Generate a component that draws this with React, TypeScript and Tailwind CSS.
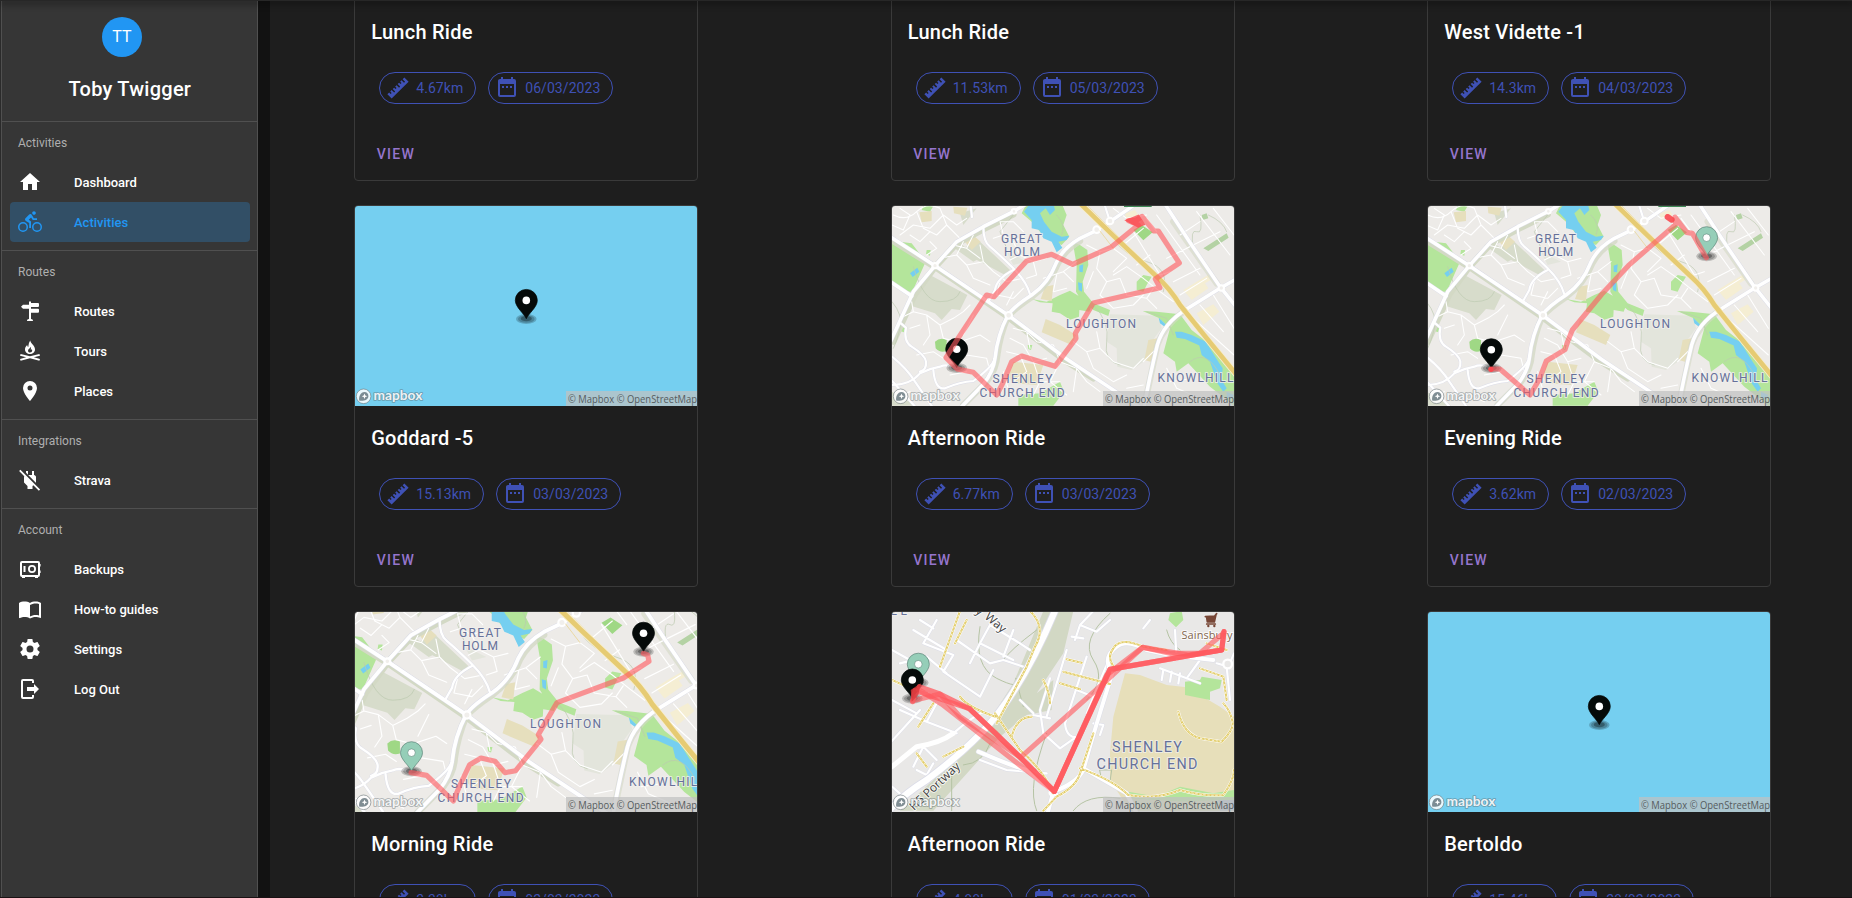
import React from "react";

const ICONS = {
  home: "M10,20V14H14V20H19V12H22L12,3L2,12H5V20H10Z",
  bike: "M5,20.5A3.5,3.5 0 0,1 1.5,17A3.5,3.5 0 0,1 5,13.5A3.5,3.5 0 0,1 8.5,17A3.5,3.5 0 0,1 5,20.5M5,12A5,5 0 0,0 0,17A5,5 0 0,0 5,22A5,5 0 0,0 10,17A5,5 0 0,0 5,12M14.8,10H19V8.2H15.8L13.86,4.93C13.57,4.43 13,4.1 12.4,4.1C11.93,4.1 11.5,4.29 11.2,4.6L7.5,8.29C7.19,8.6 7,9 7,9.5C7,10.13 7.33,10.66 7.85,10.97L11.2,13V18H13V11.5L10.75,9.85L13.07,7.5M19,20.5A3.5,3.5 0 0,1 15.5,17A3.5,3.5 0 0,1 19,13.5A3.5,3.5 0 0,1 22.5,17A3.5,3.5 0 0,1 19,20.5M19,12A5,5 0 0,0 14,17A5,5 0 0,0 19,22A5,5 0 0,0 24,17A5,5 0 0,0 19,12M16,4.8C17,4.8 17.8,4 17.8,3C17.8,2 17,1.2 16,1.2C15,1.2 14.2,2 14.2,3C14.2,4 15,4.8 16,4.8Z",
  sign: "M11,3L12,2L13,3V4H20Q21,4 21,5V7Q21,8 20,8H13V9.7H20Q21,9.7 21,10.7V12.7Q21,13.7 20,13.7H13V20C14.3,20 15,20.8 15,22H9C9,20.8 9.7,20 11,20V9.7H5L3,7.7L5,5.7H11V3Z",
  campfire: "M12.3,1.5C12.3,4.5 17,6.2 17,10.4C17,13 14.8,15 12,15C9.2,15 7,13 7,10.4C7,8.4 7.9,7 9.2,5.9C9.3,7 9.6,7.6 10.3,8C10.6,5.5 10.8,3.2 12.3,1.5M12.4,7.8C12.5,9.5 10,10 10,11.7C10,12.8 10.9,13.5 12,13.5C13.2,13.5 14.2,12.7 14.2,11.5C14.2,10.9 14,10.4 13.7,10C13.5,10.6 13.2,10.9 12.8,11C13.1,9.8 13,8.7 12.4,7.8M2.6,14.9L12,17.3L21.4,14.9L22,16.7L15.9,18.3L22,19.9L21.4,21.8L12,19.3L2.6,21.8L2,19.9L8.1,18.3L2,16.7Z",
  marker: "M12,11.5A2.5,2.5 0 0,1 9.5,9A2.5,2.5 0 0,1 12,6.5A2.5,2.5 0 0,1 14.5,9A2.5,2.5 0 0,1 12,11.5M12,2A7,7 0 0,0 5,9C5,14.25 12,22 12,22C12,22 19,14.25 19,9A7,7 0 0,0 12,2Z",
  plugOff: "M20.84 22.73L15.31 17.2L14.5 18V21H9.5V18L6 14.5V9C6 8.7 6.1 8.41 6.25 8.14L1.11 3L2.39 1.73L22.11 21.46L20.84 22.73M18 14.5V9C18 8 17 7 16 7V3H14V7H10.2L17.85 14.65L18 14.5M10 3H8V4.8L10 6.8V3Z",
  safe: "M20,4H4A2,2 0 0,0 2,6V18A2,2 0 0,0 4,20V21H7V20H17V21H20V20A2,2 0 0,0 22,18V16H22.6V13.5H22V9.5H22.6V7H22V6A2,2 0 0,0 20,4M20,18H4V6H20V18M14,8A4,4 0 1,0 14,16A4,4 0 1,0 14,8M14,14.2A2.2,2.2 0 1,1 14,9.8A2.2,2.2 0 1,1 14,14.2M5.5,9H7.5V15H5.5Z",
  book: "M21,5C19.89,4.65 18.67,4.5 17.5,4.5C15.55,4.5 13.45,4.9 12,6C10.55,4.9 8.45,4.5 6.5,4.5C4.55,4.5 2.45,4.9 1,6V20.65C1,20.9 1.25,21.15 1.5,21.15C1.6,21.15 1.65,21.1 1.75,21.1C3.1,20.45 5.05,20 6.5,20C8.45,20 10.55,20.4 12,21.5C13.35,20.65 15.8,20 17.5,20C19.15,20 20.85,20.3 22.25,21.05C22.35,21.1 22.4,21.1 22.5,21.1C22.75,21.1 23,20.85 23,20.6V6C22.4,5.55 21.75,5.25 21,5M21,18.5C19.9,18.15 18.7,18 17.5,18C15.8,18 13.35,18.65 12,19.5V8C13.35,7.15 15.8,6.5 17.5,6.5C18.7,6.5 19.9,6.65 21,7V18.5Z",
  cog: "M12,15.5A3.5,3.5 0 0,1 8.5,12A3.5,3.5 0 0,1 12,8.5A3.5,3.5 0 0,1 15.5,12A3.5,3.5 0 0,1 12,15.5M19.43,12.97C19.47,12.65 19.5,12.33 19.5,12C19.5,11.67 19.47,11.34 19.43,11L21.54,9.37C21.73,9.22 21.78,8.95 21.66,8.73L19.66,5.27C19.54,5.05 19.27,4.96 19.05,5.05L16.56,6.05C16.04,5.66 15.5,5.32 14.87,5.07L14.5,2.42C14.46,2.18 14.25,2 14,2H10C9.75,2 9.54,2.18 9.5,2.42L9.13,5.07C8.5,5.32 7.96,5.66 7.44,6.05L4.95,5.05C4.73,4.96 4.46,5.05 4.34,5.27L2.34,8.73C2.21,8.95 2.27,9.22 2.46,9.37L4.57,11C4.53,11.34 4.5,11.67 4.5,12C4.5,12.33 4.53,12.65 4.57,12.97L2.46,14.63C2.27,14.78 2.21,15.05 2.34,15.27L4.34,18.73C4.46,18.95 4.73,19.03 4.95,18.95L7.44,17.94C7.96,18.34 8.5,18.68 9.13,18.93L9.5,21.58C9.54,21.82 9.75,22 10,22H14C14.25,22 14.46,21.82 14.5,21.58L14.87,18.93C15.5,18.67 16.04,18.34 16.56,17.94L19.05,18.95C19.27,19.03 19.54,18.95 19.66,18.73L21.66,15.27C21.78,15.05 21.73,14.78 21.54,14.63L19.43,12.97Z",
  logout: "M16,17V14H9V10H16V7L21,12L16,17M14,2A2,2 0 0,1 16,4V6H14V4H5V20H14V18H16V20A2,2 0 0,1 14,22H5A2,2 0 0,1 3,20V4A2,2 0 0,1 5,2H14Z",
  ruler: "M1.39,18.36L3.16,16.6L4.58,18L5.64,16.95L4.22,15.54L5.64,14.12L8.11,16.6L9.17,15.54L6.7,13.06L8.11,11.65L9.53,13.06L10.59,12L9.17,10.59L10.59,9.17L13.06,11.65L14.12,10.59L11.65,8.11L13.06,6.7L14.47,8.11L15.54,7.05L14.12,5.64L15.54,4.22L18,6.7L19.07,5.64L16.6,3.16L18.36,1.39L22.61,5.64L5.64,22.61L1.39,18.36Z",
  calendar: "M9,10H7V12H9V10M13,10H11V12H13V10M17,10H15V12H17V10M19,3H18V1H16V3H8V1H6V3H5C3.89,3 3,3.9 3,5V19A2,2 0 0,0 5,21H19A2,2 0 0,0 21,19V5A2,2 0 0,0 19,3M19,19H5V8H19V19Z",
};
type IconName = keyof typeof ICONS;

function Icon({ name }: { name: IconName }) {
  return (
    <svg viewBox="0 0 24 24" className="size-6 shrink-0" fill="currentColor" fillRule="evenodd">
      <path d={ICONS[name]} />
    </svg>
  );
}

/* ---------- map drawing ---------- */

function Pin({ x, y, color, stroke }: { x: number; y: number; color: string; stroke?: string }) {
  return (
    <g transform={`translate(${x} ${y})`}>
      <ellipse cx="0" cy="0.3" rx="10.3" ry="5" fill="#000" opacity="0.2" />
      <ellipse cx="0" cy="0.3" rx="8.3" ry="3.8" fill="#000" opacity="0.2" />
      <ellipse cx="0" cy="0" rx="5.5" ry="2.6" fill="#000" opacity="0.3" />
      <path
        d="M0,0C-2,-5 -11,-11.5 -11,-18.3A11,11 0 0,1 11,-18.3C11,-11.5 2,-5 0,0Z"
        fill={color}
        stroke={stroke ?? color}
        strokeWidth="0.7"
      />
      <circle cx="0" cy="-18.3" r="3.8" fill="#fff" stroke={stroke ?? "none"} strokeWidth="0.6" />
    </g>
  );
}

function Label({ x, y, w, size = 12, children }: { x: number; y: number; w: number; size?: number; children: string }) {
  return (
    <text
      x={x}
      y={y}
      textLength={w}
      fontSize={size}
      fontFamily="Roboto, 'Noto Sans', sans-serif"
      fontWeight="400"
      fill="#66719a"
      stroke="#f1f0ee"
      strokeWidth="2"
      strokeOpacity="0.8"
      paintOrder="stroke"
      strokeLinejoin="round"
    >
      {children}
    </text>
  );
}

function Attribution() {
  return (
    <g>
      <rect x="211" y="185" width="131" height="15" fill="#c0c0c0" opacity="0.72" />
      <text
        x="213"
        y="197.2"
        textLength="129"
        lengthAdjust="spacingAndGlyphs"
        fontSize="11.4"
        fontFamily="'Open Sans', 'Noto Sans', sans-serif"
        fill="#565c5e"
      >
        © Mapbox © OpenStreetMap
      </text>
      <circle cx="8.6" cy="190.3" r="7.3" fill="#fff" fillOpacity="0.85" stroke="#6a7478" strokeOpacity="0.6" strokeWidth="1" />
      <path d="M4.2,194.6C3.6,190.5 5.6,186 9.4,186A4.2,4.2 0 0,1 13.4,190.2C13.4,194 8.4,195.3 4.2,194.6Z" fill="#566870" fillOpacity="0.75" />
      <path d="M9.5,187.4L10.3,189.4L12.3,190.2L10.3,191L9.5,193L8.7,191L6.7,190.2L8.7,189.4Z" fill="#fff" />
      <text
        x="18.4"
        y="193.6"
        textLength="49"
        lengthAdjust="spacingAndGlyphs"
        fontSize="12.6"
        fontFamily="Lato, sans-serif"
        fontWeight="700"
        fill="#fff"
        fillOpacity="0.9"
        stroke="#5c686c"
        strokeOpacity="0.5"
        strokeWidth="1.6"
        strokeLinejoin="round"
        paintOrder="stroke"
      >
        mapbox
      </text>
    </g>
  );
}

const MAJOR = [
  "M20,118L165,212L384,360L480,432L560,492L730,605L800,650",
  "M10,480L36,430L100,290L165,212L230,140L310,95L400,50L450,20",
  "M240,640L310,568Q340,530 345,490Q352,420 384,360Q400,335 455,300Q505,265 528,205Q548,160 600,130L650,106L690,80L770,25",
  "M850,20L935,150L1020,275L1080,350",
  "M1080,245L1020,280L920,342Q850,385 832,450Q805,560 790,650",
  "M10,246L95,303",
];
const SECONDARY = [
  "M310,95Q310,140 330,155Q360,180 400,220Q440,260 450,298",
  "M400,225Q350,250 345,285L325,320",
  "M60,383L78,398Q70,440 95,455Q135,480 138,500Q140,525 120,530",
  "M36,570Q90,570 120,535Q150,520 180,515Q200,505 230,520",
  "M160,525Q165,585 195,580Q240,560 280,558Q330,520 340,500",
  "M36,485Q80,520 105,560L160,640",
  "M20,540L110,640",
  "M272,33L276,66",
  "M675,33L690,80L640,110",
];
const MINOR = [
  "M40,60Q80,80 110,50T180,40M60,120L100,90L150,100L190,60L230,90L260,70M110,50L130,100L170,120L200,90M90,120L120,140L150,110M200,90L240,130M180,40L200,90M36,90L70,105L90,60L60,40M150,140L170,160L140,180",
  "M180,190L230,180L260,210L310,200L340,230M220,150L260,160L300,190M230,180L250,140M260,210L280,250L330,270M310,200L300,150M340,230L380,260L430,250M360,260L350,300L400,310L430,280M380,330L400,290M280,120L260,160M340,130L370,120L400,140L430,125M370,120L360,80L400,80L430,110M400,140L420,180L460,200L500,190M420,180L390,195M460,200L470,240L440,250",
  "M60,370L100,350L140,360L180,390L220,370M100,350L95,320M140,360L150,420L130,450M180,390L190,430L230,440M90,400L120,390M220,370L250,350L270,330M110,480L160,470L190,490M240,440L300,420L330,440M250,420L280,360M260,480L320,490L330,530M210,540L260,530M60,600L90,590M170,600L210,620",
  "M400,400L440,410L470,440L520,450M390,430L430,450L460,500L500,490M440,410L450,460M380,470L420,480L440,530L400,560M520,450L540,500L590,520L620,560M460,500L480,560L460,600M540,500L510,560L560,600M590,520L580,590M370,530L390,600M480,560L540,560M620,560L660,590M580,440L620,470L660,460L700,500M620,470L640,520L700,560L740,540M660,460L650,410M700,500L760,520L790,490",
  "M620,150L660,170L700,160L740,190M660,170L650,220L680,260L720,250M640,230L620,280M680,260L660,300L700,340L760,330M700,240L740,215L790,250M740,190L700,230M720,250L740,300L800,310L830,340M760,330L790,300M790,250L840,290L880,320M800,310L820,280M490,250L550,230L580,260M530,240L520,290L560,280M550,230L590,200",
  "M760,110L840,240L870,230M800,70L830,110M830,60L960,240M880,60L1000,240M900,120L960,80M920,160L1020,110M790,100L730,150M860,190L940,150M880,260L960,220M950,50L1050,180M1000,40L1062,120M900,300L980,250M960,330L1030,410M1000,300L1062,400M700,40L740,70L800,60M770,210L810,180",
  "M850,400L830,460L790,500M860,520L890,580L960,610M870,560L940,550M830,600L880,610M740,580L790,570M940,370L1062,480",
];
const OUTLINES = "M36,320Q70,360 60,400T40,460M100,215Q130,320 180,320T240,290M530,60Q560,90 545,120M700,130Q730,180 800,200T850,290M960,60Q970,120 950,110T940,160M985,60Q1030,80 1040,110M640,330Q690,380 680,440T720,510M800,350L860,370L880,420M930,500Q980,460 1020,540M400,60L360,110L380,160";

function TownTerrain() {
  return (
    <g fill="none" strokeLinecap="round" strokeLinejoin="round">
      <rect x="-200" y="-200" width="1700" height="1200" fill="#edebe8" />
      <path fill="#d7dccb" d="M150,240L262,300L240,345L215,342L185,375L165,355L85,330Z M230,165L300,140L390,225L375,240L310,205Z M210,150L240,145L300,190L280,200Z M36,590L110,632L36,632Z M240,55L290,40L250,90Z" />
      <path fill="#e3e5dc" d="M690,358L835,362L845,400L815,440L790,500L755,525L712,515L710,460L680,440Z M380,170L440,200L400,210Z" />
      <path
        fill="#b4e59b"
        d="M20,135L95,145L137,200L97,290L70,290L20,255Z M440,25L545,25L560,60L550,90L568,125L545,150L520,140L480,110L455,80L425,55Z M578,140L600,150L622,165L625,210L608,260L612,290L640,325L690,345L685,363L640,345L600,310L588,290L590,210Z M455,312L500,320L540,300L570,287L600,305L638,325L628,350L598,345L597,365L570,374L540,355L515,350L518,325L480,322Z M788,348L830,350L900,358L935,405L980,440L1015,480L1080,560L1080,650L1035,610L990,575L925,505L890,530L885,500L850,475L870,400L835,368Z M415,600L480,595L540,560L552,590L520,632L415,632Z M770,260L790,240L815,245L800,270L790,290L770,285Z M130,33L160,33L150,50L125,45Z M60,395L78,398L72,412L60,408Z M443,450L457,450L453,465L445,462Z M140,165L152,165L150,182L138,178Z M460,515L485,510L480,528L458,525Z"
      />
      <path fill="#9fd885" d="M165,440Q180,425 200,435L200,468Q180,475 167,460Z M760,105L785,90L818,112L790,136Z" />
      <path fill="#b4d2a4" d="M970,160L1040,115L1046,128L985,168Z M965,60L980,55L985,70L968,75Z" />
      <path
        fill="#75cff0"
        d="M450,25L432,50L455,75L455,100L478,105L490,130L515,140L530,172L547,158L535,140L560,135L568,122L545,125L515,110L492,80L480,55L497,40L510,60L525,45L520,25Z M90,235L112,218L118,230L98,246Z M598,212L610,208L608,232L598,230Z M594,262L606,265L606,290L596,285Z M885,410L905,410L935,420L978,440L985,455L960,452L915,432L890,428Z M957,448L985,452L1015,500L1028,520L1025,555L1040,580L1030,590L1012,565L990,500L965,480Z M836,368L862,392L858,398L840,385Z M1040,590L1062,600L1055,612L1040,608Z"
      />
      <path
        fill="#e6dfbd"
        d="M118,52L155,48L155,78L125,82Z M220,35L262,38L255,62L222,55Z M255,140L285,125L302,140L275,165Z M495,275L520,270L515,318L482,312Z M497,372L540,390L588,420L575,450L485,412Z M400,500L490,510L470,570L400,565L385,545Z M805,435L832,430L812,500L793,495Z"
      />
      <path fill="#f5eed3" d="M910,285L950,260L985,240L992,255L975,265L985,280L935,315Z M950,355L1000,328L1018,350L970,390Z M735,55L765,45L775,60L740,75Z" />
      <g stroke="#d3d9c5" strokeWidth="19">
        <path d="M42,140L165,216L384,366L480,440L560,500L640,550" />
        <path d="M40,440L104,300L165,216L230,146L312,102L400,58" />
        <path d="M250,630L320,560Q350,520 352,480Q360,420 384,364Q404,340 455,306Q510,265 534,205Q555,165 600,138" opacity="0.8" />
        <path d="M910,350Q850,395 832,450L800,600M880,80L1010,265" opacity="0.6" />
      </g>
      <path d={OUTLINES} stroke="#bccab0" strokeWidth="2" />
      {MINOR.map((d) => (
        <path key={d} d={d} stroke="#fff" strokeWidth="3.2" />
      ))}
      {SECONDARY.map((d) => (
        <path key={d} d={d} stroke="#dcdde8" strokeWidth="8.5" />
      ))}
      {MAJOR.map((d) => (
        <path key={d} d={d} stroke="#dcdde8" strokeWidth="13" />
      ))}
      {SECONDARY.map((d) => (
        <path key={d} d={d} stroke="#fff" strokeWidth="6.5" />
      ))}
      {MAJOR.map((d) => (
        <path key={d} d={d} stroke="#fff" strokeWidth="10.5" />
      ))}
      <g fill="#f1efec" stroke="#fff" strokeWidth="6">
        <circle cx="165" cy="212" r="8" />
        <circle cx="386" cy="361" r="10" />
        <circle cx="1024" cy="279" r="8" />
        <circle cx="402" cy="49" r="7" />
        <circle cx="650" cy="104" r="10" />
        <circle cx="690" cy="78" r="10" />
      </g>
      <path d="M615,25L715,125M660,108L700,160" stroke="#e9d189" strokeWidth="2" />
      <path d="M590,15L700,122L825,240Q870,280 900,330L980,430L1080,552" stroke="#f6edcf" strokeWidth="19" />
      <path d="M590,15L700,122L825,240Q870,280 900,330L980,430L1080,552" stroke="#e6cb73" strokeWidth="14" />
      <path d="M732,30H815V36H732Z" fill="#3f8a56" />
    </g>
  );
}

type Variant = "water" | "loop" | "evening" | "morning" | "shenley";

function Route({ d, o = 0.62 }: { d: string; o?: number }) {
  return <path d={d} fill="none" stroke="#ff5a5f" strokeOpacity={o} strokeWidth="15.5" strokeLinejoin="round" strokeLinecap="round" />;
}

function Loop() {
  return (
    <>
      <g transform="scale(0.33333) translate(-36 -33)">
        <TownTerrain />
      </g>
      <Label x={109} y={36.5} w={41}>GREAT</Label>
      <Label x={112} y={50.3} w={36}>HOLM</Label>
      <Label x={174} y={122} w={70}>LOUGHTON</Label>
      <Label x={100.5} y={177} w={60}>SHENLEY</Label>
      <Label x={87.5} y={191} w={85}>CHURCH END</Label>
      <Label x={265.5} y={175.7} w={76}>KNOWLHILL</Label>
      <Attribution />
      <Pin x={64.7} y={161.6} color="#050a09" />
      <g transform="scale(0.33333) translate(-36 -33)">
        <Route d="M232,522L280,532L350,600L368,565L395,500L425,483L525,514L588,430L586,415L640,324L840,278L826,252L898,204L835,108L822,108L786,64L770,75L745,77L775,90L694,156L578,208L515,178L440,198L342,305L320,300L234,430L198,488L232,522" />
        <path d="M740,76L775,62L792,88L775,95Z" fill="#fb4a50" opacity="0.8" stroke="#fb4a50" strokeWidth="6" />
      </g>
    </>
  );
}

function Evening() {
  return (
    <>
      <g transform="scale(0.33333) translate(-41 -33)">
        <TownTerrain />
      </g>
      <Label x={107} y={36.5} w={41}>GREAT</Label>
      <Label x={110.3} y={50.3} w={35}>HOLM</Label>
      <Label x={172} y={122} w={70}>LOUGHTON</Label>
      <Label x={98.5} y={177} w={59}>SHENLEY</Label>
      <Label x={85.5} y={191} w={85}>CHURCH END</Label>
      <Label x={263.5} y={175.5} w={76}>KNOWLHILL</Label>
      <Attribution />
      <Pin x={278.6} y={50} color="#95ceb8" stroke="#5d8478" />
      <Pin x={63.3} y={162} color="#050a09" />
      <g transform="scale(0.33333) translate(-39 -33)">
        <Route d="M228,522L255,522L345,600L372,555L394,498L450,464L458,440L472,405L560,298L640,212L782,88L780,66L815,112L832,115L874,188" />
        <path d="M758,66L770,74" stroke="#fb4a50" strokeWidth="18" strokeLinecap="round" opacity="0.9" />
        <circle cx="228" cy="523" r="8" fill="#fb4a50" />
      </g>
    </>
  );
}

function Morning() {
  return (
    <>
      <g transform="scale(0.33333) translate(-30 -36) translate(127 184) scale(1.08) translate(-165 -212)">
        <TownTerrain />
      </g>
      <Label x={104} y={24.5} w={42}>GREAT</Label>
      <Label x={107} y={38.3} w={36}>HOLM</Label>
      <Label x={175} y={116} w={71}>LOUGHTON</Label>
      <Label x={96} y={176} w={60}>SHENLEY</Label>
      <Label x={82.5} y={190} w={86}>CHURCH END</Label>
      <Label x={274} y={173.5} w={76}>KNOWLHILL</Label>
      <Attribution />
      <Pin x={288.5} y={39.5} color="#050a09" />
      <Pin x={56.5} y={159} color="#95ceb8" stroke="#5d8478" />
      <g transform="scale(0.33333) translate(-30 -36)">
        <Route d="M198,518L245,526L325,603L345,555L374,494L408,474L450,484L480,518L512,512L588,418L580,404L636,308L835,234L912,184L908,165L895,160" />
      </g>
    </>
  );
}

function Shenley() {
  const white = [
    "M36,500L110,440Q180,430 220,400Q270,355 310,335M20,440L120,330M60,330L140,365L170,310M140,365L230,400M36,300L110,340",
    "M170,60L130,130L220,165L190,215M100,90L200,150M120,60L160,85M330,75L420,130L450,150M330,75L300,130L400,180M300,130L270,190M230,120L330,190L370,180M190,215L300,290L340,210M370,180L430,200M400,90L370,170M36,150L90,180M60,190L140,170L200,220",
    "M100,500L130,440L170,480M110,510L140,525L160,490M36,560L70,590",
    "M585,120L600,75L640,33M600,75L650,95L690,60M575,110L610,115M560,150L500,350M620,170L555,370Q560,420 600,410M690,170L620,340M590,270L640,290M510,235L480,330L490,400L540,445L590,410M460,345L510,355M420,300L460,340",
    "M885,90L890,180M810,60L790,85M840,205L960,250M850,210L845,240M875,215L870,245M900,220L895,250M920,235L960,180M1010,190L1045,200L1062,160M1040,200L1050,300",
    "M640,370L670,375L660,405M300,480L380,510L500,520",
  ];
  const dashed =
    "M190,470L250,440M240,33L180,200M260,60L225,130M560,178L605,188M550,215L690,252M540,250L600,268M490,240Q510,280 510,310M455,350Q410,350 395,410M345,340L420,450Q490,510 520,580M600,505Q700,540 745,585Q830,600 900,570Q970,590 1030,585Q1062,540 1062,510M700,200Q680,170 700,145Q720,110 790,140L860,150M960,205L1030,230L1040,300M895,335Q910,400 960,415L1025,425Q1062,390 1058,365Q1050,330 1030,310M36,240L80,260M110,460L140,500M115,380L160,310M980,130L1040,150M240,290Q260,320 345,350M450,33Q500,80 465,140L440,200L350,370M640,400L600,520Q590,560 530,590L490,632";
  return (
    <>
      <g transform="scale(0.33333) translate(-36 -36)" fill="none" strokeLinecap="round" strokeLinejoin="round">
        <rect x="0" y="0" width="1100" height="700" fill="#e9e8e7" />
        <path d="M490,33L580,33L550,160L470,280L520,240L515,330L440,345L360,410L160,632L60,632L290,420L400,250Z" fill="#d2d8c4" />
        <path d="M735,220L780,225L860,255L920,262L960,285L1020,320L1062,350V632H750L690,540L690,460L700,350Z" fill="#e7dfba" />
        <path d="M915,245L960,240L965,230L1025,240L1020,265L990,275L990,300L915,285Z M870,40L905,33L910,60L888,82L865,60Z M745,575L830,590L900,560L1000,580L1062,570V610L900,605L740,595Z" fill="#b4e59b" />
        <path d="M740,595L900,605L1020,600V632H755Z" fill="#cfdcb4" />
        <path d="M1015,600L1062,600V632H1020Z" fill="#a9bccb" />
        <path d="M300,80Q280,200 350,235T410,240T430,320M470,90Q390,150 370,180M690,40Q600,120 640,180T620,300M250,495Q310,490 330,430M215,500V632M580,632Q620,580 720,595M860,90Q870,130 900,150M500,400Q440,560 470,632M660,510L695,510L690,545L665,535Z" stroke="#b5c3a4" strokeWidth="3" />
        {white.map((d) => (
          <path key={d} d={d} stroke="#dcdde8" strokeWidth="9" />
        ))}
        {white.map((d) => (
          <path key={d} d={d} stroke="#fff" strokeWidth="6.5" />
        ))}
        <path d="M700,210Q640,400 610,510Q590,550 520,575L500,650M295,455Q400,500 440,510L530,585M690,210Q670,170 710,140Q740,115 800,150L870,165L1000,180M610,505L740,580L770,640" stroke="#dcdde8" strokeWidth="15" />
        <path d="M700,210Q640,400 610,510Q590,550 520,575L500,650M295,455Q400,500 440,510L530,585M690,210Q670,170 710,140Q740,115 800,150L870,165L1000,180M610,505L740,580L770,640" stroke="#fff" strokeWidth="12" />
        <path d="M20,640Q60,590 140,540Q260,450 330,370Q440,240 530,20" stroke="#dcdde8" strokeWidth="24" />
        <path d="M20,640Q60,590 140,540Q260,450 330,370Q440,240 530,20" stroke="#fff" strokeWidth="19" />
        <path d="M36,500L110,440Q180,430 220,400" stroke="#fff" strokeWidth="15" />
        <circle cx="1043" cy="192" r="13" fill="#e9e8e7" stroke="#fff" strokeWidth="7" />
        <circle cx="518" cy="578" r="9" fill="#e9e8e7" stroke="#fff" strokeWidth="7" />
        <path d={dashed} stroke="#fff" strokeWidth="9" />
        <path d={dashed} stroke="#e2cc66" strokeWidth="6" />
        <path d={dashed} stroke="#fff" strokeWidth="2.2" strokeDasharray="7 5" strokeLinecap="butt" />
        <path d="M976,50L1004,48L1010,41M980,50L982,66H1003L1008,44M980,72H1006" stroke="#774636" strokeWidth="5" />
        <path d="M978,50L1006,48L1003,66H982Z" fill="#774636" />
        <circle cx="985" cy="78" r="3.5" fill="#774636" />
        <circle cx="1003" cy="78" r="3.5" fill="#774636" />
      </g>
      <g fontFamily="'Open Sans', 'Noto Sans', sans-serif" stroke="#fff" strokeOpacity="0.8" strokeWidth="2" paintOrder="stroke">
        <text x="289.5" y="27.2" textLength="51" fontSize="11" fontWeight="500" fill="#81654f">Sainsbury</text>
        <text transform="translate(92 6) rotate(40)" fontSize="12" fill="#3f3f3f">Way</text>
        <text transform="translate(83 0.5) rotate(35)" fontSize="12" fill="#3f3f3f">y</text>
        <text transform="translate(22 199) rotate(-43)" textLength="64" fontSize="12" fill="#3f3f3f">H5 Portway</text>
      </g>
      <Label x={-12} y={3} w={27}>ELL</Label>
      <Label x={220} y={140} w={70} size={14.4}>SHENLEY</Label>
      <Label x={204.5} y={157} w={101} size={14.4}>CHURCH END</Label>
      <Attribution />
      <Pin x={26.3} y={70.5} color="#95ceb8" stroke="#5d8478" />
      <Pin x={20.3} y={86.3} color="#050a09" />
      <g transform="scale(0.33333) translate(-36 -36)">
        <Route d="M98,305L105,272L268,326L345,398L523,574L690,208L1025,150L1032,95" o={0.75} />
        <Route d="M118,260L175,280L268,326L440,490L523,574L690,208L1025,150L1032,95" o={0.75} />
        <Route d="M115,268L185,312L410,488L523,574L680,225L788,142L925,165L1025,150" />
        <Route d="M98,302L180,282L240,350L422,472L690,232L788,142L870,160L960,160L1030,100" />
        <path d="M92,270L122,250L115,285L95,305Z" fill="#e0383c" opacity="0.8" />
      </g>
    </>
  );
}

function MapPicture({ variant }: { variant: Variant }) {
  return (
    <svg viewBox="0 0 342 200" className="block h-[200px] w-[342px] shrink-0 overflow-hidden">
      {variant === "water" && (
        <>
          <rect width="342" height="200" fill="#75cff0" />
          <Attribution />
          <Pin x={171.3} y={112.7} color="#050a09" />
        </>
      )}
      {variant === "loop" && <Loop />}
      {variant === "evening" && <Evening />}
      {variant === "morning" && <Morning />}
      {variant === "shenley" && <Shenley />}
    </svg>
  );
}

/* ---------- cards ---------- */

function Chip({ icon, children }: { icon: IconName; children: string }) {
  return (
    <span className="flex h-8 items-center gap-[6px] rounded-full border border-[#3f51b5] pr-3 pl-[6px] text-sm tracking-[0.06px] text-[#3f51b5]">
      <Icon name={icon} />
      {children}
    </span>
  );
}

interface Ride {
  title: string;
  distance: string;
  date: string;
  map: Variant;
}

function RideCard({ ride }: { ride: Ride }) {
  return (
    <article className="flex h-[382px] w-[344px] flex-col overflow-hidden rounded border border-[#3a3a3a] bg-[#1e1e1e]">
      <MapPicture variant={ride.map} />
      <h2 className="px-4 pt-4 text-xl leading-8 font-medium tracking-[0.25px] text-white">{ride.title}</h2>
      <div className="mt-6 flex gap-3 pl-6">
        <Chip icon="ruler">{ride.distance}</Chip>
        <Chip icon="calendar">{ride.date}</Chip>
      </div>
      <div className="mt-8 flex h-9 items-center pl-[21.5px]">
        <button className="text-sm leading-5 font-medium tracking-[1.25px] text-[#9575cd] uppercase">View</button>
      </div>
    </article>
  );
}

const RIDES: Ride[] = [
  { title: "Lunch Ride", distance: "4.67km", date: "06/03/2023", map: "water" },
  { title: "Lunch Ride", distance: "11.53km", date: "05/03/2023", map: "water" },
  { title: "West Vidette -1", distance: "14.3km", date: "04/03/2023", map: "water" },
  { title: "Goddard -5", distance: "15.13km", date: "03/03/2023", map: "water" },
  { title: "Afternoon Ride", distance: "6.77km", date: "03/03/2023", map: "loop" },
  { title: "Evening Ride", distance: "3.62km", date: "02/03/2023", map: "evening" },
  { title: "Morning Ride", distance: "3.38km", date: "02/03/2023", map: "morning" },
  { title: "Afternoon Ride", distance: "4.88km", date: "01/03/2023", map: "shenley" },
  { title: "Bertoldo", distance: "15.46km", date: "28/02/2023", map: "water" },
];

/* ---------- sidebar ---------- */

interface NavItem {
  label: string;
  icon: IconName;
  active?: boolean;
}

const NAV: { heading: string; items: NavItem[] }[] = [
  {
    heading: "Activities",
    items: [
      { label: "Dashboard", icon: "home" },
      { label: "Activities", icon: "bike", active: true },
    ],
  },
  {
    heading: "Routes",
    items: [
      { label: "Routes", icon: "sign" },
      { label: "Tours", icon: "campfire" },
      { label: "Places", icon: "marker" },
    ],
  },
  { heading: "Integrations", items: [{ label: "Strava", icon: "plugOff" }] },
  {
    heading: "Account",
    items: [
      { label: "Backups", icon: "safe" },
      { label: "How-to guides", icon: "book" },
      { label: "Settings", icon: "cog" },
      { label: "Log Out", icon: "logout" },
    ],
  },
];

function Sidebar() {
  return (
    <aside className="flex w-[258px] shrink-0 border-r border-[#505050] bg-[#363636]">
      <div className="w-0.5 shrink-0 border-r border-[#505050] bg-[#2b2b2b]" />
      <div className="flex min-w-0 flex-1 flex-col">
        <header className="flex h-[121px] flex-col pt-[17px]">
          <div className="ml-[100px] flex size-10 items-center justify-center rounded-full bg-[#2196f3] text-base tracking-[0.2px] text-white">
            TT
          </div>
          <div className="mt-4 pl-[66.5px] text-xl leading-8 font-medium tracking-[0.25px] text-white">Toby Twigger</div>
        </header>
        {NAV.map((group) => (
          <section key={group.heading} className="border-t border-[#505050] pb-2">
            <h3 className="flex h-10 items-center px-4 pt-0.5 text-xs text-[#afafaf]">{group.heading}</h3>
            <ul className="pr-[7px] pl-2">
              {group.items.map((item) => (
                <li
                  key={item.label}
                  className={
                    item.active
                      ? "flex h-10 items-center gap-8 rounded bg-[#324f66] px-2 text-[13px] font-medium text-[#2196f3]"
                      : "flex h-10 items-center gap-8 rounded px-2 text-[13px] font-medium text-white"
                  }
                >
                  <Icon name={item.icon} />
                  <span className="pt-[2px]">{item.label}</span>
                </li>
              ))}
            </ul>
          </section>
        ))}
      </div>
    </aside>
  );
}

export default function App() {
  return (
    <div className="relative flex h-[898px] w-[1852px] overflow-hidden bg-[#1e1e1e] font-[Roboto,'Noto_Sans',sans-serif]">
      <Sidebar />
      <main className="h-full min-w-0 flex-1 overflow-hidden border-l-[12px] border-[#121212]">
        <div className="-mt-[201px] -ml-3 grid w-[1609.4px] grid-cols-3 justify-items-center gap-y-6">
          {RIDES.map((ride) => (
            <RideCard key={ride.date + ride.title} ride={ride} />
          ))}
        </div>
      </main>
      <div className="absolute inset-x-0 top-0 h-px bg-[#272727] shadow-[0_2px_6px_1px_rgba(0,0,0,0.5)]" />
      <div className="absolute inset-x-0 bottom-0 h-px bg-[#1a1113]" />
    </div>
  );
}
